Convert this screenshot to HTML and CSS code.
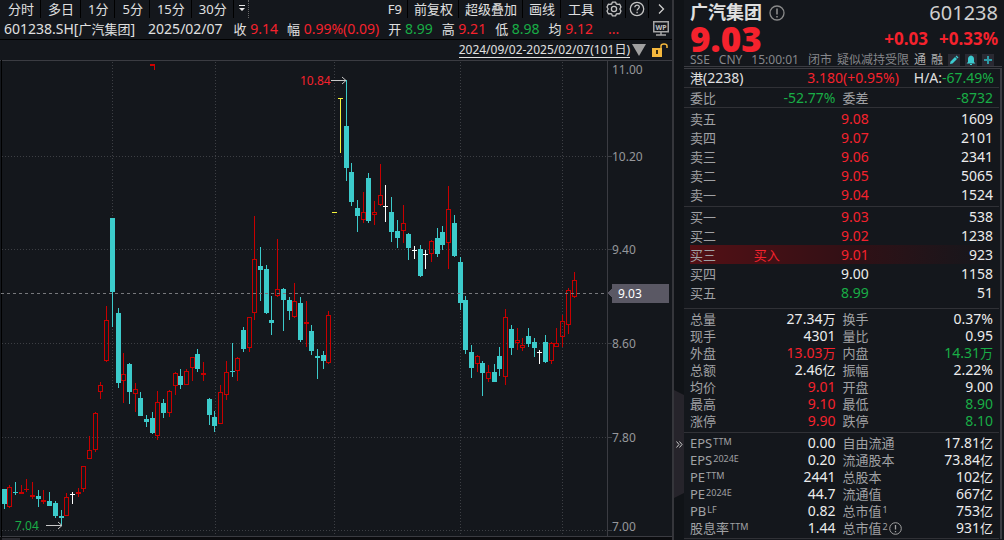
FILE: index.html
```html
<!DOCTYPE html>
<html lang="zh-CN">
  <head>
    <meta charset="UTF-8" />
    <meta name="viewport" content="width=device-width, initial-scale=1.0" />
    <title>广汽集团 601238</title>
    <link rel="stylesheet" href="styles.css">
  </head>
  <body>
    <main class="chart-panel">
      <nav class="toolbar">
        <div class="periods">
          <button type="button">分时</button>
          <button type="button">多日</button>
          <button type="button">1分</button>
          <button type="button">5分</button>
          <button type="button">15分</button>
          <button type="button">30分</button>
          <button type="button" class="more" aria-label="更多周期">
            <svg width="8" height="8" viewBox="0 0 8 8"><path d="M1 0h6v1H1zM1 3h6L4 6z" fill="#e8e8e8" /></svg>
          </button>
        </div>
        <div class="tools">
          <button type="button">F9</button>
          <button type="button">前复权</button>
          <button type="button">超级叠加</button>
          <button type="button">画线</button>
          <button type="button" class="wide">工具</button>
          <button type="button" class="icon" aria-label="设置">
            <svg width="16" height="16" viewBox="0 0 16 16" fill="none" stroke="#c4c4c4" stroke-width="1.3">
              <path d="M6.3 1.2h3.4l.6 1.8 1.9.4 1.5-.2 1.3 2.8-1.2 2 1.2 2-1.3 2.8-1.5-.2-1.9.4-.6 1.8H6.3L5.700 13l-1.900-.4-1.500.2L1 10l1.200-2L1 6l1.300-2.800 1.500.2L5.700 3z" stroke-linejoin="round" />
              <circle cx="8" cy="8" r="2.600" />
            </svg>
          </button>
          <button type="button" class="icon" aria-label="帮助">
            <svg width="16" height="16" viewBox="0 0 16 16" fill="none" stroke="#c4c4c4" stroke-width="1.3">
              <circle cx="8" cy="8" r="6.700" />
              <path d="M5.800 6.300c0-3 4.500-2.700 4.500-.2 0 1.700-2.200 1.600-2.200 3.500M8.100 10.800v1.400" />
            </svg>
          </button>
          <button type="button" class="icon" aria-label="展开">
            <svg width="8" height="12" viewBox="0 0 8 12" fill="none" stroke="#d0d0d0" stroke-width="1.3"><path d="M2 1.500L6.500 6 2 10.500" /></svg>
          </button>
        </div>
      </nav>

      <div class="info-bar">
        <span class="code">601238.SH[<small>广汽集团</small>]</span>
        <span class="date">2025/02/07</span>
        <span><small>收</small> <b class="up">9.14</b></span>
        <span><small>幅</small> <b class="up">0.99%(0.09)</b></span>
        <span><small>开</small> <b class="down">8.99</b></span>
        <span><small>高</small> <b class="up">9.21</b></span>
        <span><small>低</small> <b class="down">8.98</b></span>
        <span><small>均</small> <b class="up">9.12</b></span>
        <span class="up dots">...</span>
        <svg class="wp" width="16" height="15" viewBox="0 0 16 15">
          <path d="M.75.75h14.500v10H.75zM8 11v2.500M3 14h10" fill="none" stroke="#a5a5a5" stroke-width="1.500" />
          <text x="8" y="8.500" text-anchor="middle">WP</text>
        </svg>
      </div>

      <div class="range-bar">
        <a href="#">2024/09/02-2025/02/07(101日)</a>
        <svg width="14" height="12" viewBox="0 0 14 12"><path d="M0 0h14L7 12z" fill="#a0a0a0" /></svg>
        <svg class="lock" width="16" height="14" viewBox="0 0 16 14">
          <path d="M0 5h10v9H0z" fill="#f5b83d" />
          <path d="M9 5V3q0-2 3-2t3 2v2" fill="none" stroke="#f5b83d" stroke-width="1.500" />
          <path d="M4 7h2v4H4z" fill="#3a2c10" />
        </svg>
      </div>

      <svg id="chart" class="chart" viewBox="0 60 672 480" role="img" aria-label="日K线">
        <path class="frame" d="M0 60h672v1H0zM0 536h672v1H0zM607 60h1v477h-1z" />
        <path d="M1 58h1v482H1z" fill="#000" />
        <path d="M0 537h672v3H0z" fill="#0b0c0f" />
        <path d="M2 538h18v2H2z" fill="#2a2a30" />
        <g id="grid" class="grid"></g>
        <g id="candles"></g>
        <path class="last-line" d="M1 293.500h606" />
        <path d="M150 64h5v6h-1v-4h-4z" fill="#d00000" />

        <g class="arrow">
          <path d="M331 80.500h15M342 77l4 3.500-4 3.500" />
          <path d="M46 525.500h15M58 522l4 3.500-4 3.500" />
        </g>
        <text class="high" x="300" y="85">10.84</text>
        <text class="low" x="15" y="530">7.04</text>

        <g class="axis">
          <text x="612" y="74">11.00</text>
          <text x="612" y="161">10.20</text>
          <text x="612" y="254">9.40</text>
          <text x="612" y="348">8.60</text>
          <text x="612" y="442">7.80</text>
          <text x="612" y="531">7.00</text>
        </g>
        <path d="M607 293l5-4v-5h57v19h-57v-6z" fill="#5a5864" />
        <text class="last" x="618" y="298">9.03</text>
      </svg>
    </main>

    <div class="gutter">
      <button type="button" aria-label="收起">
        <svg width="7" height="7" viewBox="0 0 7 7" fill="none" stroke="#c8c8c8"><path d="M.5.5l2.500 3-2.500 3M3.500.5l2.500 3-2.500 3" /></svg>
      </button>
    </div>

    <aside class="quote">
      <header>
        <div class="title">
          <h1>广汽集团</h1>
          <svg width="16" height="16" viewBox="0 0 16 16" fill="none" stroke="#8a8a8a" stroke-width="1.300"><circle cx="8" cy="8" r="7" /><path d="M8 3.500v6M8 11v1.500" stroke-width="1.600" /></svg>
          <span class="number">601238</span>
        </div>
        <div class="price up">
          <strong>9.03</strong>
          <span>+0.03</span>
          <span>+0.33%</span>
        </div>
        <div class="status">
          <span>SSE</span>
          <span>CNY</span>
          <span>15:00:01</span>
          <span>闭市</span>
          <span>疑似减持受限</span>
          <span class="tag">通</span>
          <span class="tag">融</span>
          <button type="button" aria-label="编辑"><svg width="12" height="12" viewBox="0 0 12 12"><path d="M2 10l.5-2.500L7 3l2 2-4.500 4.500zM7.600 2.400L8.500 1.500l2 2-.9.900z" fill="#3ccbd0" /></svg></button>
          <button type="button" aria-label="提醒"><svg width="12" height="12" viewBox="0 0 12 12"><path d="M1.500 9.500L3 8V5q0-3 3-3.500Q9 2 9 5v3l1.500 1.500zM5 10h2v1H5z" fill="#3ccbd0" /></svg></button>
          <button type="button" aria-label="添加"><svg width="12" height="12" viewBox="0 0 12 12"><path d="M5 2h2v3h3v2H7v3H5V7H2V5h3z" fill="#2d9aa6" /></svg></button>
        </div>
      </header>

      <div class="details">
        <div class="row related">
          <span><small>港</small>(2238)</span>
          <span class="up">3.180(+0.95%)</span>
          <span>H/A:<b class="down">-67.49%</b></span>
        </div>

        <table class="pairs ratio">
          <tr><th>委比</th><td class="down">-52.77%</td><th>委差</th><td class="down">-8732</td></tr>
        </table>

        <table class="orders">
          <tr><th>卖五</th><td></td><td class="up">9.08</td><td>1609</td></tr>
          <tr><th>卖四</th><td></td><td class="up">9.07</td><td>2101</td></tr>
          <tr><th>卖三</th><td></td><td class="up">9.06</td><td>2341</td></tr>
          <tr><th>卖二</th><td></td><td class="up">9.05</td><td>5065</td></tr>
          <tr><th>卖一</th><td></td><td class="up">9.04</td><td>1524</td></tr>
        </table>

        <table class="orders buy">
          <tr><th>买一</th><td></td><td class="up">9.03</td><td>538</td></tr>
          <tr><th>买二</th><td></td><td class="up">9.02</td><td>1238</td></tr>
          <tr class="active"><th>买三</th><td><button type="button">买入</button></td><td class="up">9.01</td><td>923</td></tr>
          <tr><th>买四</th><td></td><td>9.00</td><td>1158</td></tr>
          <tr><th>买五</th><td></td><td class="down">8.99</td><td>51</td></tr>
        </table>

        <table class="pairs">
          <tr><th>总量</th><td>27.34<small>万</small></td><th>换手</th><td>0.37%</td></tr>
          <tr><th>现手</th><td>4301</td><th>量比</th><td>0.95</td></tr>
          <tr><th>外盘</th><td class="up">13.03<small>万</small></td><th>内盘</th><td class="down">14.31<small>万</small></td></tr>
          <tr><th>总额</th><td>2.46<small>亿</small></td><th>振幅</th><td>2.22%</td></tr>
          <tr><th>均价</th><td class="up">9.01</td><th>开盘</th><td>9.00</td></tr>
          <tr><th>最高</th><td class="up">9.10</td><th>最低</th><td class="down">8.90</td></tr>
          <tr><th>涨停</th><td class="up">9.90</td><th>跌停</th><td class="down">8.10</td></tr>
        </table>

        <table class="pairs">
          <tr><th>EPS<sup>TTM</sup></th><td>0.00</td><th>自由流通</th><td>17.81<small>亿</small></td></tr>
          <tr><th>EPS<sup>2024E</sup></th><td>0.20</td><th>流通股本</th><td>73.84<small>亿</small></td></tr>
          <tr><th>PE<sup>TTM</sup></th><td>2441</td><th>总股本</th><td>102<small>亿</small></td></tr>
          <tr><th>PE<sup>2024E</sup></th><td>44.7</td><th>流通值</th><td>667<small>亿</small></td></tr>
          <tr><th>PB<sup>LF</sup></th><td>0.82</td><th>总市值<sup>1</sup></th><td>753<small>亿</small></td></tr>
          <tr>
            <th>股息率<sup>TTM</sup></th><td>1.44</td>
            <th>总市值<sup>2</sup><svg width="13" height="13" viewBox="0 0 13 13" fill="none" stroke="#a0a0a0"><circle cx="6.500" cy="6.500" r="5.800" /><path d="M6.500 3v4.500M6.500 9v1.300" stroke-width="1.300" /></svg></th>
            <td>931<small>亿</small></td>
          </tr>
        </table>
      </div>
    </aside>

    <script src="chart.js"></script>
  </body>
</html>
```

FILE: styles.css
```css
* {
  box-sizing: border-box;
}
body {
  display: grid;
  grid-template-columns: minmax(0, 1fr) 12px 320px;
  min-height: 100vh;
  margin: 0;
  background-color: #14171c;
  color: #e0e0e0;
  font-family: "Noto Sans", "Noto Sans CJK SC", sans-serif;
  font-size: 14px;
}
button {
  border: 0;
  padding: 0;
  background: none;
  color: inherit;
  font: inherit;
  cursor: pointer;
}
svg {
  display: block;
  flex: none;
}
small {
  font-size: 13px;
  line-height: 1;
}
b {
  font-weight: normal;
}
.up {
  color: #f5222d;
}
.down {
  color: #19ad46;
}

/* toolbar */
.toolbar {
  display: flex;
  justify-content: space-between;
  height: 18px;
  padding-left: 1px;
  font-size: 13px;
  line-height: 18px;
}
.periods,
.tools {
  display: flex;
}
.toolbar button {
  display: flex;
  align-items: center;
  justify-content: center;
  padding: 0 6px 0 7px;
  border-right: 1px solid #000;
  white-space: nowrap;
}
.toolbar .tools button {
  padding: 0 5px 0 6px;
}
.toolbar .tools .wide {
  padding: 0 8px 0 7px;
}
.toolbar .tools .icon {
  width: 23px;
  padding: 0;
}
.toolbar .tools .icon:last-child {
  border-right: 0;
}
.toolbar .more {
  padding: 0 2px 0 4px;
  border-right: 1px dotted #666;
}

.info-bar {
  display: flex;
  align-items: center;
  gap: 9px;
  height: 22px;
  padding: 0 3px 0 4px;
  border-bottom: 1px solid #000;
  line-height: 20px;
  white-space: nowrap;
}
.info-bar .date {
  margin: 0 2px 0 4px;
}
.info-bar .dots {
  margin-left: 6px;
}
.info-bar .wp {
  margin-left: auto;
}
.wp text {
  fill: #c0c0c0;
  font-size: 7px;
  font-weight: bold;
}

.range-bar {
  display: flex;
  align-items: center;
  justify-content: flex-end;
  gap: 2px;
  height: 20px;
  padding-right: 4px;
  font-size: 12px;
}
.range-bar a {
  border-bottom: 1px solid #e0e0e0;
  color: #e0e0e0;
  line-height: 14px;
  text-decoration: none;
}
.range-bar .lock {
  margin-left: 4px;
}

/* chart */
.chart {
  width: 100%;
  height: auto;
  font-size: 12px;
  shape-rendering: crispEdges;
}
.frame {
  fill: #3b3c42;
}
.grid {
  stroke: #3d3f44;
}
.grid .dots {
  stroke-dasharray: 1 2;
}
.last-line {
  stroke: #77787c;
  stroke-dasharray: 3 3;
}
.arrow {
  fill: none;
  stroke: #c8c8c8;
  shape-rendering: auto;
}
.chart .high {
  fill: #f5222d;
}
.chart .low {
  fill: #19ad46;
}
.axis text {
  fill: #96979b;
}
.last {
  fill: #fff;
}
.rise {
  stroke: #c80000;
  fill: none;
}
.fall {
  stroke: #3ccbcb;
  fill: #3ccbcb;
}
.flat {
  stroke: #fff;
  fill: #fff;
}
.limit {
  stroke: #f5f53c;
  fill: #f5f53c;
}

/* strip between chart and quote */
.gutter {
  display: flex;
  flex-direction: column;
  justify-content: flex-end;
  padding-bottom: 42px;
  border-left: 2px solid #35363b;
  background-color: #101317;
}
.gutter button {
  display: flex;
  align-items: center;
  justify-content: center;
  height: 108px;
  background-color: #26242b;
  clip-path: polygon(0 0, 100% 5px, 100% 103px, 0 100%);
}

/* quote */
.quote {
  padding-right: 2px;
}
.quote header {
  height: 67px;
  padding: 0 4px 0 6px;
  border-bottom: 1px solid #3b3c42;
}
.title {
  display: flex;
  align-items: center;
  height: 25px;
}
.title h1 {
  margin: 0 7px 0 0;
  font-size: 18px;
  line-height: 25px;
}
.title .number {
  margin-left: auto;
  color: #cfcfcf;
  font-size: 20px;
  line-height: 25px;
}
.price {
  display: flex;
  align-items: center;
  gap: 11px;
  height: 27px;
  font-size: 17px;
  font-weight: bold;
  line-height: 25px;
}
.price strong {
  margin-right: auto;
  font-size: 35px;
}
.status {
  display: flex;
  align-items: center;
  gap: 5px;
  height: 15px;
  color: #85868a;
  font-size: 12px;
  line-height: 15px;
  white-space: nowrap;
}
.status span:nth-child(-n + 3) {
  margin-right: 4px;
}
.status .tag {
  color: #b0b0b0;
}
.status button {
  background-color: #2a2a33;
}
.details {
  margin-top: 1px;
  padding-right: 1px;
  border-top: 1px solid #3b3c42;
  border-right: 2px solid #3b3c42;
}
.row {
  display: flex;
  justify-content: space-between;
  height: 19px;
  padding: 0 5px 0 6px;
  border-bottom: 1px solid #303136;
  line-height: 18px;
}
.related span:nth-child(2) {
  margin-left: 49px;
}
table {
  width: 100%;
  padding: 1px 6px 2px;
  border-bottom: 1px solid #303136;
  border-spacing: 0;
  table-layout: fixed;
}
th,
td {
  height: 17px;
  padding: 0;
  line-height: 16px;
  vertical-align: middle;
  white-space: nowrap;
}
th {
  color: #a0a1a4;
  font-size: 13px;
  font-weight: normal;
  text-align: left;
}
td {
  color: #ececec;
  text-align: right;
}
td.up {
  color: #f5222d;
}
td.down {
  color: #19ad46;
}
.pairs {
  padding-bottom: 3px;
}
.pairs th {
  width: 26%;
}
.pairs td {
  width: 22%;
}
.pairs th:nth-child(3) {
  width: 30%;
  padding-left: 7px;
}
.pairs:last-child {
  padding-bottom: 2px;
}
.ratio {
  padding-bottom: 1px;
}
.orders th,
.orders td {
  height: 19px;
}
.orders th {
  width: 21%;
}
.orders td:nth-child(2) {
  width: 16%;
  text-align: left;
}
.orders td:nth-child(3) {
  width: 22%;
}
.buy {
  padding-top: 0;
  padding-bottom: 6px;
}
.active {
  background: linear-gradient(90deg, #541015, #331015 50%, #14171c);
}
.active button {
  display: block;
  color: #f5222d;
  font-size: 13px;
}
sup {
  margin-left: 1px;
  font-size: 9px;
  line-height: 0;
  vertical-align: 3px;
}
th svg {
  display: inline-block;
  margin-left: 1px;
  vertical-align: -2px;
}
```

FILE: chart.js
```js
const NS = "http://www.w3.org/2000/svg";

// kind, high, body top, body bottom, low
const days = [
  ["fall", 489, 489, 504, 509], ["rise", 485, 487, 507, 508], ["fall", 482, 492, 493, 495],
  ["rise", 485, 492, 494, 494], ["rise", 479, 489, 490, 492], ["rise", 482, 495, 497, 499],
  ["fall", 490, 496, 499, 507], ["rise", 490, 500, 502, 504], ["fall", 492, 501, 506, 506],
  ["fall", 501, 503, 516, 518], ["fall", 510, 516, 518, 526], ["rise", 493, 497, 516, 516],
  ["flat", 492, 494, 495, 504], ["rise", 488, 492, 494, 497], ["rise", 466, 466, 489, 492],
  ["rise", 436, 450, 459, 459], ["rise", 412, 413, 450, 452], ["rise", 382, 385, 392, 399],
  ["rise", 306, 320, 361, 362], ["fall", 218, 218, 292, 327], ["fall", 308, 313, 383, 388],
  ["rise", 353, 374, 381, 403], ["fall", 363, 364, 392, 404], ["rise", 383, 389, 394, 412],
  ["fall", 392, 398, 416, 416], ["fall", 415, 419, 422, 427], ["fall", 412, 418, 433, 434],
  ["rise", 391, 402, 436, 440], ["fall", 399, 403, 413, 418], ["rise", 390, 391, 413, 417],
  ["rise", 372, 373, 386, 395], ["fall", 369, 376, 385, 389], ["rise", 369, 371, 385, 385],
  ["rise", 357, 357, 368, 381], ["fall", 349, 354, 369, 372], ["rise", 362, 373, 375, 381],
  ["fall", 398, 399, 415, 425], ["fall", 411, 417, 426, 432], ["rise", 385, 392, 424, 424],
  ["rise", 361, 372, 395, 400], ["fall", 343, 371, 372, 377], ["rise", 357, 358, 371, 381],
  ["fall", 327, 330, 349, 352], ["rise", 317, 317, 348, 352], ["rise", 216, 259, 313, 320],
  ["fall", 247, 266, 270, 301], ["fall", 265, 269, 313, 314], ["fall", 296, 320, 323, 335],
  ["rise", 239, 289, 296, 297], ["fall", 288, 289, 300, 331], ["fall", 297, 300, 311, 320],
  ["rise", 283, 301, 317, 318], ["fall", 297, 303, 340, 342], ["rise", 301, 322, 324, 347],
  ["fall", 325, 331, 351, 355], ["fall", 349, 356, 358, 379], ["fall", 351, 355, 361, 369],
  ["rise", 311, 315, 363, 364], ["limit", 212, 212, 213, 213], ["limit", 98, 98, 99, 153],
  ["fall", 80, 126, 168, 181], ["fall", 163, 172, 202, 206], ["fall", 200, 208, 216, 232],
  ["rise", 192, 212, 220, 223], ["fall", 173, 178, 221, 223], ["rise", 201, 212, 215, 225],
  ["rise", 164, 195, 205, 206], ["flat", 185, 206, 207, 222], ["fall", 197, 212, 232, 242],
  ["fall", 220, 231, 238, 248], ["rise", 205, 223, 231, 243], ["fall", 233, 234, 248, 260],
  ["flat", 246, 250, 251, 259], ["fall", 245, 249, 276, 277], ["flat", 250, 254, 255, 269],
  ["rise", 240, 241, 254, 262], ["fall", 228, 238, 254, 257], ["fall", 226, 232, 245, 250],
  ["rise", 186, 209, 243, 269], ["fall", 215, 223, 256, 257], ["fall", 257, 262, 303, 310],
  ["fall", 296, 300, 350, 354], ["fall", 345, 352, 368, 378], ["rise", 355, 356, 364, 372],
  ["fall", 361, 363, 373, 396], ["rise", 365, 372, 379, 382], ["fall", 364, 372, 382, 382],
  ["fall", 347, 356, 369, 376], ["rise", 309, 317, 377, 385], ["fall", 325, 329, 348, 355],
  ["rise", 328, 340, 343, 350], ["rise", 338, 345, 348, 351], ["fall", 328, 336, 344, 347],
  ["fall", 338, 342, 348, 357], ["flat", 350, 352, 353, 364], ["fall", 335, 342, 362, 363],
  ["rise", 342, 343, 361, 364], ["rise", 328, 343, 347, 347], ["rise", 315, 321, 337, 347],
  ["rise", 288, 290, 325, 334], ["rise", 272, 280, 297, 298],
];

function addPath(parent, className, d) {
  const path = document.createElementNS(NS, "path");
  path.setAttribute("class", className);
  path.setAttribute("d", d);
  parent.appendChild(path);
}

const grid = document.getElementById("grid");
[156, 249, 343, 437, 530].forEach((y) => {
  addPath(grid, "dots", `M2 ${y + 0.5}H607`);
  addPath(grid, "tick", `M608 ${y + 0.5}h4`);
});
[112, 215, 334, 460, 562].forEach((x) => {
  addPath(grid, "dots", `M${x + 0.5} 62V536`);
});

const candles = document.getElementById("candles");
days.forEach(([kind, high, top, bottom, low], i) => {
  const x = Math.floor((40 + 57 * i) / 10) + 0.5;
  let d = `M${x} ${high}V${top}M${x} ${bottom}V${low}`;
  if (bottom - top === 1) {
    d += `M${x - 2.5} ${top + 0.5}h5`;
  } else {
    d += `M${x - 2} ${top + 0.5}h4V${bottom - 0.5}h-4z`;
  }
  addPath(candles, kind, d);
});
```
